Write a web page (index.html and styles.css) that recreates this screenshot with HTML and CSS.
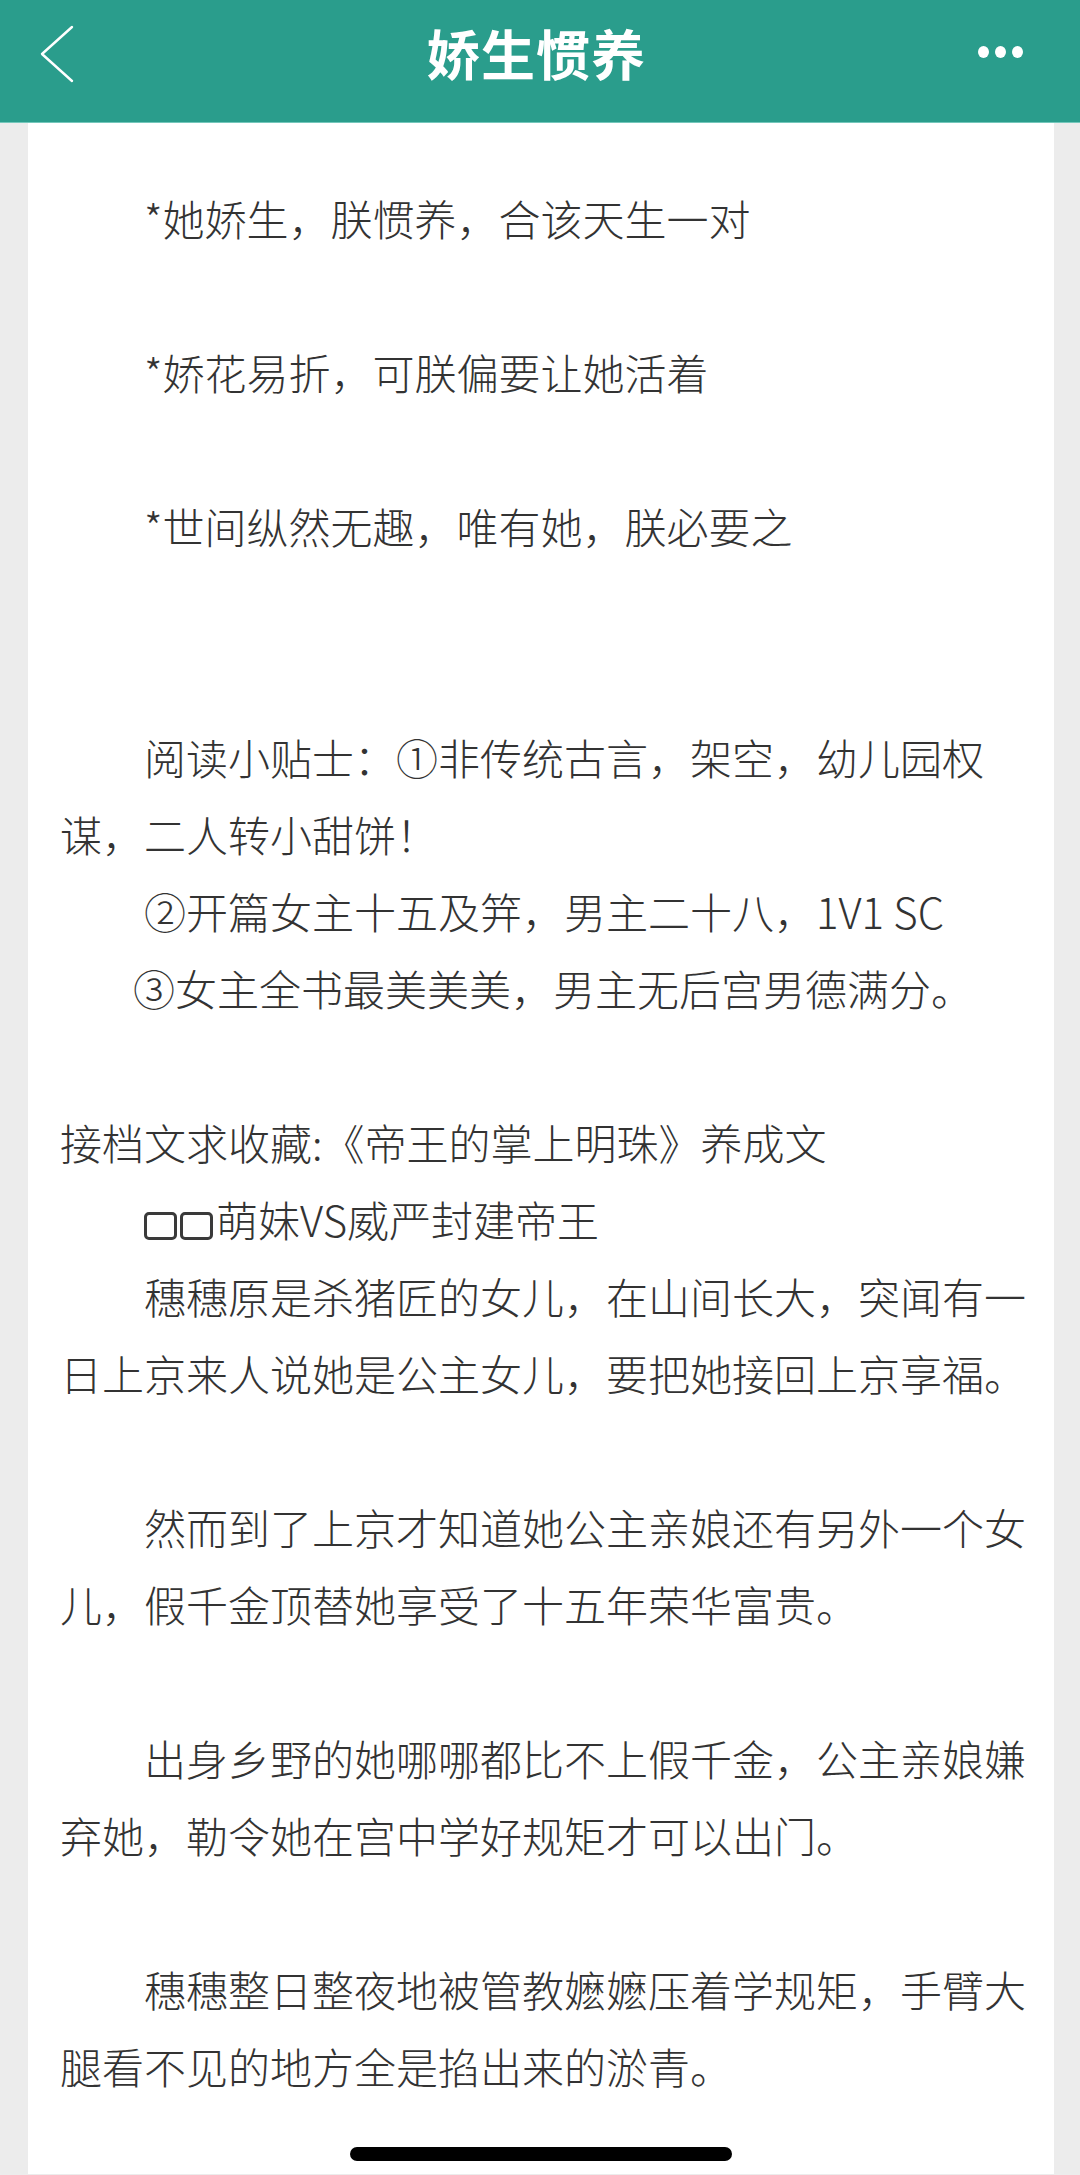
FILE: index.html
```html
<!DOCTYPE html>
<html lang="zh-CN">
<head>
    <meta charset="UTF-8">
    <meta name="viewport" content="width=device-width, initial-scale=1.0">
    <title>娇生惯养</title>
    <link rel="stylesheet" href="styles.css">
</head>
<body>
    <header class="topbar">
        <a class="back" href="#" aria-label="返回">
            <svg width="36" height="60" viewBox="0 0 36 60">
                <polyline points="32,2 2,29 32,56" fill="none" stroke="#fff" stroke-width="2.4" stroke-linecap="round" stroke-linejoin="round"/>
            </svg>
        </a>
        <h1 class="title">娇生惯养</h1>
        <div class="more" aria-label="更多">
            <span></span><span></span><span></span>
        </div>
    </header>

    <main class="page">
        <article class="content">
            <p class="gap">*她娇生，朕惯养，合该天生一对</p>
            <p class="gap">*娇花易折，可朕偏要让她活着</p>
            <p class="gap-2">*世间纵然无趣，唯有她，朕必要之</p>

            <p>阅读小贴士：①非传统古言，架空，幼儿园权谋，二人转小甜饼！</p>
            <p>②开篇女主十五及笄，男主二十八，1V1 SC</p>
            <p class="gap short-indent">③女主全书最美美美，男主无后宫男德满分。</p>

            <p class="no-indent">接档文求收藏:《帝王的掌上明珠》养成文</p>
            <p><span class="tofu"></span><span class="tofu"></span>萌妹VS威严封建帝王</p>
            <p class="gap">穗穗原是杀猪匠的女儿，在山间长大，突闻有一日上京来人说她是公主女儿，要把她接回上京享福。</p>
            <p class="gap">然而到了上京才知道她公主亲娘还有另外一个女儿，假千金顶替她享受了十五年荣华富贵。</p>
            <p class="gap">出身乡野的她哪哪都比不上假千金，公主亲娘嫌弃她，勒令她在宫中学好规矩才可以出门。</p>
            <p>穗穗整日整夜地被管教嬷嬷压着学规矩，手臂大腿看不见的地方全是掐出来的淤青。</p>
        </article>
        <div class="home-bar"></div>
    </main>
</body>
</html>
```

FILE: styles.css
```css
html, body {
    margin: 0;
    padding: 0;
}
body {
    width: 1080px;
    height: 2175px;
    overflow: hidden;
    background-color: #ececec;
    font-family: "Noto Sans CJK SC", "Noto Sans", sans-serif;
    color: #333;
}

/* top navigation bar */
.topbar {
    height: 123px;
    background-color: #2a9d8c;
    border-bottom: 1px solid #74c7bb;
    display: flex;
    align-items: center;
    justify-content: space-between;
    padding: 0 57px 0 40px;
    box-sizing: border-box;
}
.back {
    display: flex;
    width: 36px;
    height: 60px;
    margin-top: -13px;
}
.title {
    margin: 0;
    color: #fff;
    font-size: 54px;
    font-weight: bold;
    letter-spacing: 1px;
    margin-top: -18px;
    margin-left: 18px;
}
.more {
    display: flex;
    gap: 6px;
    margin-top: -19px;
}
.more span {
    width: 11px;
    height: 12px;
    border-radius: 50%;
    background-color: #fff;
}

/* reading area */
.page {
    margin: 0 26px 0 28px;
    background-color: #fff;
    height: calc(2175px - 124px);
    position: relative;
}
.content {
    padding: 56px 24px 0 32px;
}
.content p {
    margin: 0;
    font-size: 42px;
    font-weight: 300;
    line-height: 77px;
    text-indent: 84px;
}
.content p.gap {
    margin-bottom: 77px;
}
.content p.gap-2 {
    margin-bottom: 154px;
}
.content p.short-indent {
    text-indent: 73px;
}
.content p.no-indent {
    text-indent: 0;
}

/* missing-glyph boxes */
.tofu {
    display: inline-block;
    width: 33px;
    height: 28px;
    box-sizing: border-box;
    border: 3px solid #3a3a3a;
    border-radius: 5px;
    margin-right: 3px;
    vertical-align: -3px;
}

.home-bar {
    position: absolute;
    left: 322px;
    bottom: 13px;
    width: 382px;
    height: 14px;
    border-radius: 7px;
    background-color: #000;
}
```
